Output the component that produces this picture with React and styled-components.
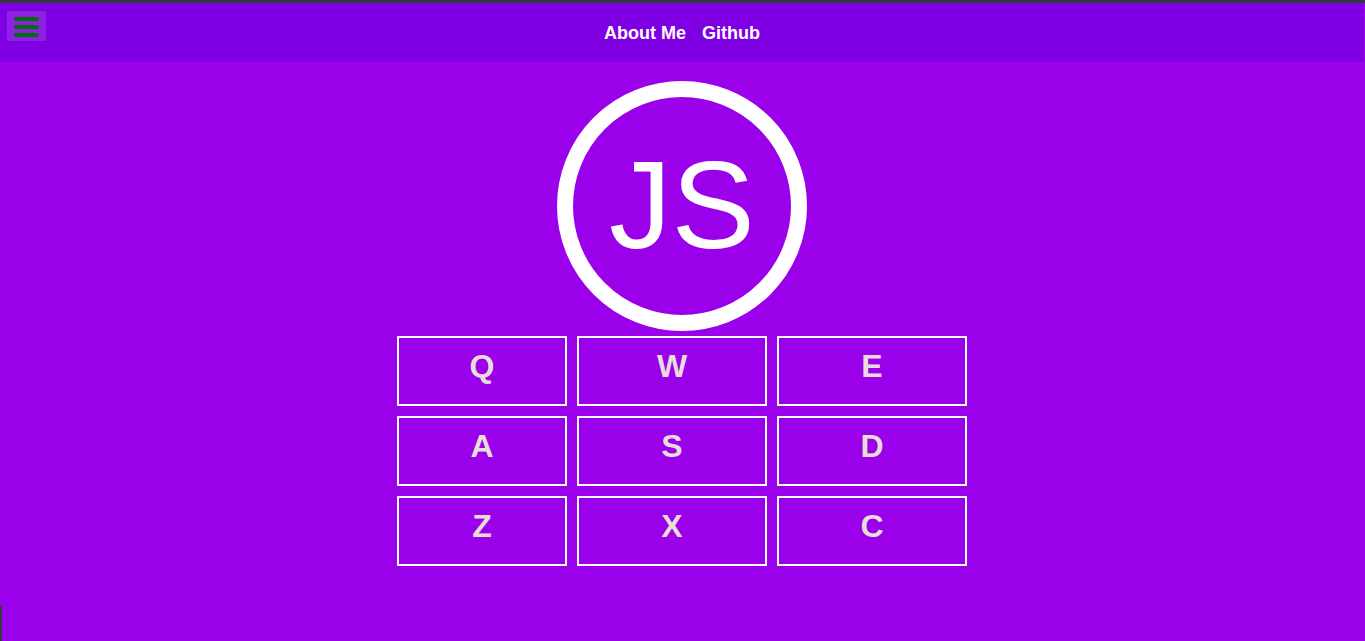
import React from "react";
import styled, { createGlobalStyle } from "styled-components";

const Global = createGlobalStyle`
  html, body { margin: 0; padding: 0; }
  body {
    background: #9b00ea;
    font-family: "Liberation Sans", Arial, sans-serif;
    height: 641px;
    overflow: hidden;
  }
`;

const Page = styled.div`
  min-height: 641px;
  border-top: 3px solid #343a3d;
  box-sizing: border-box;
  display: flex;
  flex-direction: column;
  position: relative;
  padding-right: 1px;
`;

const Header = styled.header`
  height: 59px;
  background: #7f00e2;
  display: flex;
  align-items: center;
  justify-content: center;
  position: relative;
`;

const MenuButton = styled.button`
  position: absolute;
  left: 7px;
  top: 8px;
  width: 39px;
  height: 30px;
  border: none;
  padding: 6px 0 0;
  box-sizing: border-box;
  background: rgba(255, 255, 255, 0.12);
  display: flex;
  flex-direction: column;
  align-items: center;
  justify-content: flex-start;
  gap: 4px;
`;

const Bar = styled.span`
  display: block;
  width: 25px;
  height: 4px;
  border-radius: 2px;
  background: #007000;
`;

const Nav = styled.nav`
  display: flex;
  gap: 16px;
  margin-top: 1px;
`;

const NavLink = styled.a`
  color: #ffffff;
  font-weight: bold;
  font-size: 18px;
  text-decoration: none;
`;

const Main = styled.main`
  display: flex;
  flex-direction: column;
  align-items: center;
  padding-top: 19px;
`;

const Avatar = styled.div`
  width: 250px;
  height: 250px;
  box-sizing: border-box;
  border: 16px solid #ffffff;
  border-radius: 50%;
  display: flex;
  align-items: center;
  justify-content: center;
  color: #ffffff;
  font-size: 125px;
  line-height: 1;
  padding-bottom: 4px;
`;

const Grid = styled.div`
  margin-top: 5px;
  display: grid;
  grid-template-columns: 170px 190px 190px;
  grid-auto-rows: 70px;
  gap: 10px;
`;

const Key = styled.div`
  box-sizing: border-box;
  border: 2px solid #ffffff;
  color: #e9ddd7;
  font-weight: bold;
  font-size: 32px;
  text-align: center;
  padding-top: 10px;
  line-height: 37px;
`;

const Edge = styled.div`
  position: absolute;
  left: 0;
  bottom: 0;
  width: 2px;
  height: 35px;
  background: #3a3a3a;
`;

const keys = ["Q", "W", "E", "A", "S", "D", "Z", "X", "C"];

export default function App() {
  return (
    <>
      <Global />
      <Page>
        <Header>
          <MenuButton aria-label="menu">
            <Bar />
            <Bar />
            <Bar />
          </MenuButton>
          <Nav>
            <NavLink href="#">About Me</NavLink>
            <NavLink href="#">Github</NavLink>
          </Nav>
        </Header>
        <Main>
          <Avatar>JS</Avatar>
          <Grid>
            {keys.map((k) => (
              <Key key={k}>{k}</Key>
            ))}
          </Grid>
        </Main>
        <Edge />
      </Page>
    </>
  );
}
